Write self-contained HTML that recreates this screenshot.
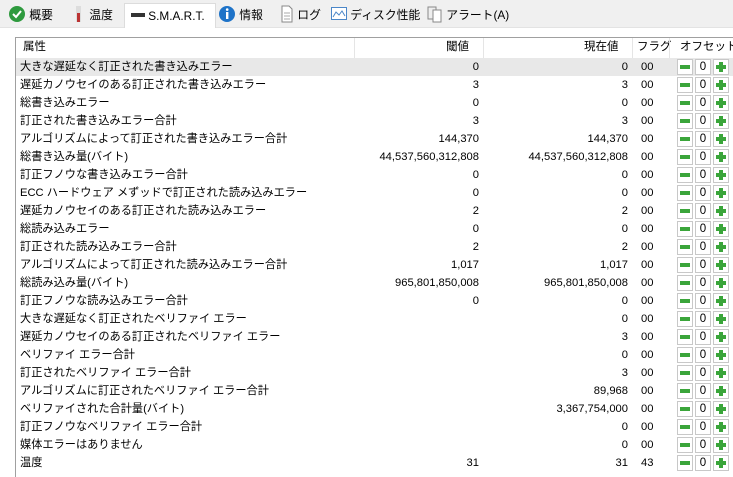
<!DOCTYPE html><html><head><meta charset="utf-8"><style>
*{margin:0;padding:0;box-sizing:border-box}
body{width:733px;height:469px;overflow:hidden;background:#fff;font-family:"Liberation Sans","Noto Sans CJK JP",sans-serif;font-size:12px;color:#000;position:relative}
#tabs{position:absolute;left:0;top:0;width:733px;height:28px;background:#f0f0f0;border-bottom:1px solid #e3e3e3}
.tab{position:absolute;top:3px;height:25px;line-height:24px;font-size:11.8px;white-space:nowrap}
.sel{background:#fff;border:1px solid #dcdcdc;border-bottom:none}
#tbl{position:absolute;left:15px;top:37px;width:730px;height:440px;border-left:1px solid #a0a0a0;border-top:1px solid #a0a0a0}
.hdr{position:absolute;top:0;height:20px;line-height:19px;font-size:11.5px}
.sep{position:absolute;top:0;width:1px;height:20px;background:#e5e5e5}
.row{position:absolute;left:0;width:720px;height:18px;line-height:18px;font-size:11.2px;white-space:nowrap}
.a{position:absolute;left:4px}
.t{position:absolute;right:257px}
.c{position:absolute;right:108px}
.f{position:absolute;left:625px}
.o{position:absolute;left:661px;top:1px;height:16px;width:56px}
.o span{position:absolute;top:0;width:16px;height:16px;border:1px solid #c8c8c8;background:#fff}
.m::after{content:"";position:absolute;left:2px;top:5px;width:10px;height:4px;background:#3aa53a}
.p::before{content:"";position:absolute;left:2px;top:5px;width:10px;height:4px;background:#3aa53a}
.p::after{content:"";position:absolute;left:5px;top:2px;width:4px;height:10px;background:#3aa53a}
.z{text-align:center;line-height:15px;font-size:11.5px}
</style></head><body>
<div id="tabs">
<div class="tab" style="left:8px"><svg width="18" height="18" style="vertical-align:-4px"><circle cx="9" cy="9" r="8" fill="#2e9a3e"/><path d="M5 9l3 3 5-6" stroke="#fff" stroke-width="2" fill="none"/></svg> 概要</div>
<div class="tab" style="left:72px"><svg width="14" height="18" style="vertical-align:-4px"><rect x="4" y="1" width="5" height="16" fill="#ddd"/><rect x="5" y="8" width="3" height="9" fill="#b33"/></svg> 温度</div>
<div class="tab sel" style="left:124px;width:92px;padding-left:6px"><span style="display:inline-block;width:14px;height:4px;background:#333;vertical-align:3px"></span> S.M.A.R.T.</div>
<div class="tab" style="left:218px"><svg width="18" height="18" style="vertical-align:-4px"><circle cx="9" cy="9" r="8" fill="#1e73c8"/><rect x="8" y="7" width="2.4" height="7" fill="#fff"/><circle cx="9.2" cy="4.6" r="1.3" fill="#fff"/></svg> 情報</div>
<div class="tab" style="left:280px"><svg width="14" height="18" style="vertical-align:-4px"><path d="M2 1h7l3 3v13H2z" fill="#fff" stroke="#888"/><path d="M4 8h6M4 11h6M4 14h6" stroke="#aaa"/></svg> ログ</div>
<div class="tab" style="left:331px"><svg width="16" height="14" style="vertical-align:-2px"><rect x="0.5" y="0.5" width="15" height="12" fill="#fff" stroke="#4a86c8"/><path d="M2 10l3-5 3 3 3-4 3 5" stroke="#4a86c8" fill="none"/></svg> ディスク性能</div>
<div class="tab" style="left:427px"><svg width="16" height="18" style="vertical-align:-4px"><path d="M1 2h8v12H1z" fill="#eee" stroke="#888"/><path d="M6 5h8v12H6z" fill="#fff" stroke="#888"/></svg> アラート(A)</div>
</div>
<div id="tbl">
<div class="hdr" style="left:7px">属性</div>
<div class="sep" style="left:338px"></div>
<div class="hdr" style="left:430px">閾値</div>
<div class="sep" style="left:467px"></div>
<div class="hdr" style="left:568px">現在値</div>
<div class="sep" style="left:616px"></div>
<div class="hdr" style="left:621px">フラグ</div>
<div class="sep" style="left:653px"></div>
<div class="hdr" style="left:664px">オフセット</div>
<div id="rows"></div>
</div>
<script>
var d=[["大きな遅延なく訂正された書き込みエラー","0","0"],["遅延カノウセイのある訂正された書き込みエラー","3","3"],["総書き込みエラー","0","0"],["訂正された書き込みエラー合計","3","3"],["アルゴリズムによって訂正された書き込みエラー合計","144,370","144,370"],["総書き込み量(バイト)","44,537,560,312,808","44,537,560,312,808"],["訂正フノウな書き込みエラー合計","0","0"],["ECC ハードウェア メずッドで訂正された読み込みエラー","0","0"],["遅延カノウセイのある訂正された読み込みエラー","2","2"],["総読み込みエラー","0","0"],["訂正された読み込みエラー合計","2","2"],["アルゴリズムによって訂正された読み込みエラー合計","1,017","1,017"],["総読み込み量(バイト)","965,801,850,008","965,801,850,008"],["訂正フノウな読み込みエラー合計","0","0"],["大きな遅延なく訂正されたベリファイ エラー","","0"],["遅延カノウセイのある訂正されたベリファイ エラー","","3"],["ベリファイ エラー合計","","0"],["訂正されたベリファイ エラー合計","","3"],["アルゴリズムに訂正されたベリファイ エラー合計","","89,968"],["ベリファイされた合計量(バイト)","","3,367,754,000"],["訂正フノウなベリファイ エラー合計","","0"],["媒体エラーはありません","","0"],["温度","31","31"]];
var h="";d.forEach(function(r,i){var y=20+i*18;h+='<div class="row" style="top:'+y+'px;'+(i==0?'background:#e8e8e8':'')+'"><span class="a">'+r[0]+'</span><span class="t">'+r[1]+'</span><span class="c">'+r[2]+'</span><span class="f">'+(i==22?'43':'00')+'</span><div class="o"><span class="m" style="left:0"></span><span class="z" style="left:18px">0</span><span class="p" style="left:36px"></span></div></div>'});
document.getElementById("rows").innerHTML=h;
</script>
</body></html>
